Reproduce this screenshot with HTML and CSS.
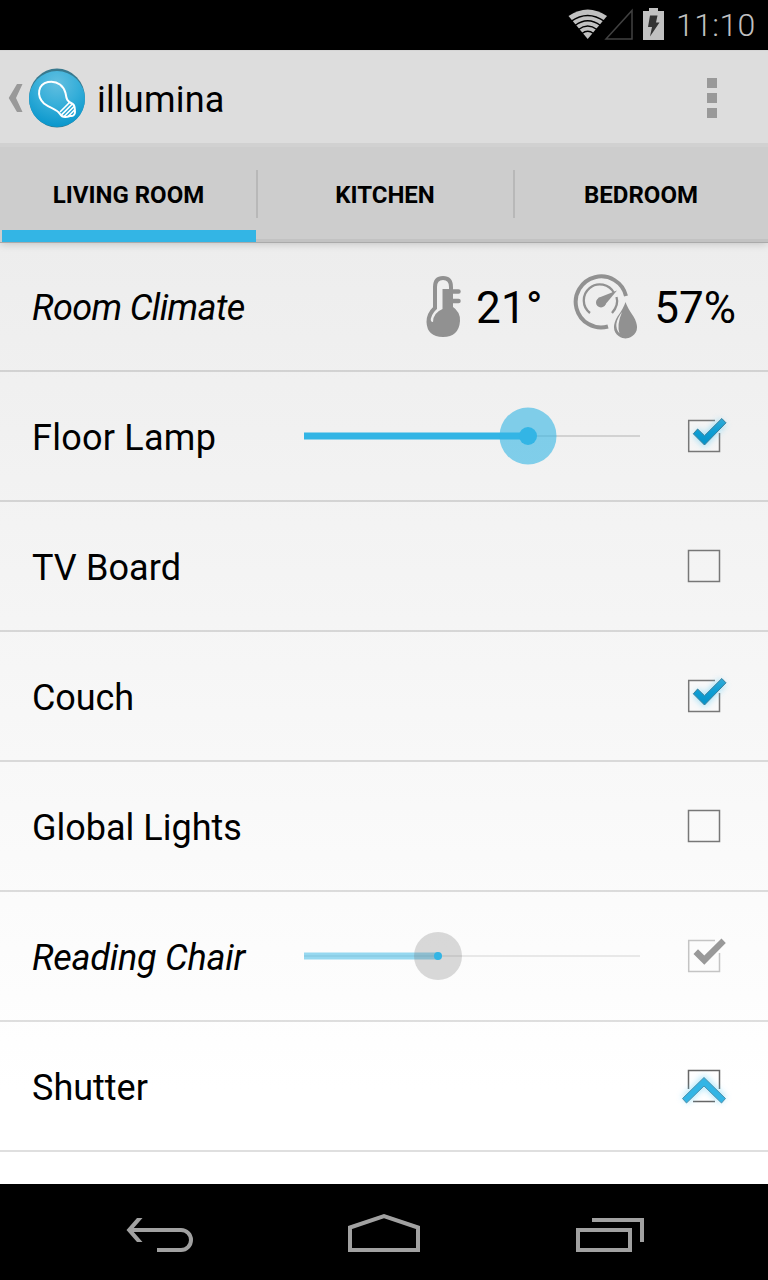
FILE: index.html
```html
<!DOCTYPE html>
<html lang="en">
<head>
<meta charset="utf-8">
<title>illumina</title>
<link rel="stylesheet" href="styles.css">
</head>
<body>
<svg width="0" height="0" class="defs">
  <defs>
    <linearGradient id="blue" x1="0" y1="0" x2="0" y2="1"><stop offset="0" stop-color="#33aad6"/><stop offset=".5" stop-color="#0d9dd3"/><stop offset="1" stop-color="#0792c7"/></linearGradient>
    <radialGradient id="logo" cx=".5" cy=".22" r=".8"><stop offset="0" stop-color="#62bfe0"/><stop offset=".5" stop-color="#35aed9"/><stop offset="1" stop-color="#0795cb"/></radialGradient>
    <filter id="glow" x="-50%" y="-50%" width="200%" height="200%"><feGaussianBlur stdDeviation="3.2"/></filter>
    <symbol id="on" viewBox="0 0 64 64">
      <path d="M13 17h26l8 11-3.500 1v18.500H13z" fill="#fff" opacity=".3"/>
      <path d="M39 16.500H12.700v31H43.500V29" fill="none" stroke="#777" stroke-width="1.500"/>
      <path d="M20 28l8.500 8.500L46.500 18" fill="none" stroke="#61cdf5" stroke-width="9" opacity=".55" filter="url(#glow)"/>
      <path d="M17.300 29.800l4.300-4.800 6.900 6.700 17.300-17.200 4.200 4.300L28.500 41z" fill="url(#blue)" stroke="#397f9b"/>
    </symbol>
    <symbol id="off" viewBox="0 0 64 64"><rect x="12.500" y="16.500" width="31" height="31" fill="none" stroke="#777" stroke-width="1.500"/></symbol>
    <symbol id="dim" viewBox="0 0 64 64">
      <path d="M39 16.500H12.700v31H43.500V29" fill="none" stroke="#c4c4c4" stroke-width="1.500"/>
      <path d="M17.500 30l4.500-4.800 6.300 6.300L45.500 14.500l4.300 4.400L28.300 40.700z" fill="#999"/>
    </symbol>
  </defs>
</svg>
<main class="screen">
  <header class="status">
    <svg width="104" height="50" viewBox="0 0 104 50">
      <path d="M8.500 16Q27.700 3 47 16L27.700 39z" fill="#c1c1c1"/>
      <g fill="none" stroke="#000" stroke-width="1.500"><path d="M11 21.300Q27.700 9.500 44.500 21.300M15 25.500Q27.700 16 40.500 25.500M18.500 29.500Q27.700 22.500 37 29.500M22 33.500Q27.700 29 33.500 33.500"/></g>
      <path d="M46 39L72 10.500V39z" fill="none" stroke="#414141" stroke-width="1.500"/>
      <path d="M83 11h6V8h9v3h6v29H83z" fill="#c1c1c1"/>
      <path d="M90 15.500h7.500L96 22.500h3.500L90 36.500 92 27h-4z" fill="#333"/>
    </svg>
    <span class="clock">11:10</span>
  </header>
  <section class="actionbar">
    <svg width="86" height="93" viewBox="0 0 86 93">
      <path d="M17 34h5.500L16 48l6.500 14H17L8.700 48z" fill="#999"/>
      <ellipse cx="57" cy="48" rx="28" ry="29.500" fill="#38798e"/>
      <ellipse cx="57" cy="49" rx="28" ry="28" fill="url(#logo)"/>
      <g fill="none" stroke="#fff" stroke-width="2" stroke-linejoin="round" stroke-linecap="round">
        <path d="M60 64C56 58 51 59 44 53.500C36 46 38 34 48 32C58 30 64 37 65.500 43C66.500 49 67 51.500 72 53.500C75.500 55 74.500 58 75 62C75 65 73 66.500 70 66C66 67.500 62 67.500 60 64z"/>
        <path stroke-width="1.700" d="M60.500 61.500l8.500-8.500M62 64.300l10.300-10.300M64.500 66l9-9M68.500 66l6-6"/>
      </g>
    </svg>
    <h1>illumina</h1>
    <span class="overflow"><i></i><i></i><i></i></span>
  </section>
  <nav class="tabs">
    <div class="tab active"><span>LIVING ROOM</span></div>
    <div class="tab"><span>KITCHEN</span></div>
    <div class="tab"><span>BEDROOM</span></div>
  </nav>
  <section class="list">
    <div class="row climate">
      <span class="label italic">Room Climate</span>
      <svg width="36" height="64" viewBox="0 0 36 64">
        <path d="M9 33V12q0-9 8-9t8 9v21Q32.500 38 32 46q-1 14-15 14T2.500 47Q2.500 39 9 33z" fill="none" stroke="#919191" stroke-width="4"/>
        <path d="M16.500 14H26v19q7 5 6 14-2 12-15 13Q4 59 3 47q0-3 1-6 0 6 3 6 0-9 9.500-13z" fill="#919191"/>
        <path d="M24 16.500h8.500M24 26h8.500" stroke="#919191" stroke-width="4.500" stroke-linecap="round"/>
      </svg>
      <span class="value temp">21°</span>
      <svg width="66" height="66" viewBox="0 0 66 66">
        <g fill="none" stroke="#919191"><path d="M53 22A25.500 25.500 0 1 0 35 52.500" stroke-width="4"/><path d="M17 39A16 16 0 1 1 41 19M43.500 23q2.500 8-4.500 16" stroke-width="2.300"/></g>
        <circle cx="28" cy="28.500" r="5" fill="#919191"/><path d="M25 24L44 16.500 31 32z" fill="#919191"/>
        <path d="M52.500 28q2 6 8 14.500c10 17-4 22-8 22s-18-5-8-22q6-8 8-14.500z" fill="#919191"/>
        <path d="M49 38Q39 51 46.500 59.500 43.500 51 49 38z" fill="#eee"/>
      </svg>
      <span class="value humidity">57%</span>
    </div>
    <div class="row"><span class="label floor">Floor Lamp</span>
      <svg class="slider" width="360" height="64" viewBox="0 0 360 64"><path d="M12 32h336" stroke="#d2d2d2" stroke-width="2"/><path d="M12 32h224" stroke="#33b5e5" stroke-width="7"/><circle cx="236" cy="32" r="28.500" fill="#33b5e5" opacity=".6"/><circle cx="236" cy="32" r="9" fill="#33b5e5"/></svg>
      <svg class="check" width="64" height="64"><use href="#on"/></svg></div>
    <div class="row"><span class="label tv">TV Board</span><svg class="check" width="64" height="64"><use href="#off"/></svg></div>
    <div class="row"><span class="label couch">Couch</span><svg class="check" width="64" height="64"><use href="#on"/></svg></div>
    <div class="row"><span class="label">Global Lights</span><svg class="check" width="64" height="64"><use href="#off"/></svg></div>
    <div class="row"><span class="label italic reading">Reading Chair</span>
      <svg class="slider" width="360" height="64" viewBox="0 0 360 64"><path d="M12 32h336" stroke="#e8e8e8" stroke-width="2"/><path d="M12 32h134" stroke="#33b5e5" stroke-width="7" opacity=".5"/><circle cx="146" cy="32" r="24" fill="#777" opacity=".27"/><circle cx="146" cy="32" r="4" fill="#33b5e5"/></svg>
      <svg class="check" width="64" height="64"><use href="#dim"/></svg></div>
    <div class="row"><span class="label">Shutter</span>
      <svg class="check" width="64" height="64" viewBox="0 0 64 64"><path d="M12.500 35V16.500H43.500V35M17 47.500h22" fill="none" stroke="#666" stroke-width="1.500"/><path d="M9 46l19-19 19 19" fill="none" stroke="#61cdf5" stroke-width="9" opacity=".5" filter="url(#glow)"/><path d="M6.500 44.500L28 23.500l21.500 21-4 4.500L28 32 10.500 49z" fill="#33b5e5" stroke="#4c91ad" stroke-width="1"/></svg></div>
  </section>
  <footer class="navbar">
    <svg width="768" height="96" viewBox="0 0 768 96">
      <g fill="none" stroke="#a1a1a1" stroke-width="4">
        <path d="M130 46H181a10 10 0 0 1 0 20H157"/>
        <path d="M350 66V43.500L384 32l34 11.500V66z"/>
        <path d="M578 46h52v20h-52zM592 36h50v22"/>
      </g>
      <path d="M137 34h5.500L132 46l10.500 12H137L126.500 46z" fill="#a1a1a1"/>
    </svg>
  </footer>
</main>
</body>
</html>
```
FILE: styles.css
```css
* { box-sizing: border-box; }
body { margin: 0; background: #000; font-family: Roboto, sans-serif; color: #000; }
svg { display: block; flex: none; }
.defs { position: absolute; }
.screen { width: 768px; height: 1280px; overflow: hidden; display: flex; flex-direction: column; }
.status { height: 50px; flex: none; display: flex; padding-left: 560px; background: #000; }
.clock { margin-left: 12px; font-size: 32px; line-height: 51px; color: #c1c1c1; letter-spacing: .4px; font-weight: 300; }
.actionbar { height: 93px; flex: none; display: flex; align-items: center; background: linear-gradient(#d5d5d5 1px, #ddd 1px); }
h1 { margin: 7px 0 0 11px; font-size: 36px; line-height: 42px; font-weight: 400; letter-spacing: .2px; }
.overflow { margin: 3px 51px 0 auto; display: flex; flex-direction: column; gap: 5px; }
.overflow i { width: 10px; height: 10px; background: #999; }
.tabs { height: 100px; flex: none; display: grid; grid-template-columns: 256px 257px 255px; background: #cdcdcd; border-top: 4px solid #d1d1d1; border-bottom: 1px solid #aaa; box-shadow: 0 1px 8px rgba(0,0,0,.18); clip-path: inset(0 0 -14px 0); z-index: 1; }
.tab { display: flex; justify-content: center; padding: 34px 0 0 1px; font-size: 24px; line-height: 28px; font-weight: 700; background: linear-gradient(#b8b8b8,#b8b8b8) left 23px / 2px 48px no-repeat, linear-gradient(#c2c2c2,#c2c2c2) left bottom / 100% 3px no-repeat; }
.tab.active { background: linear-gradient(#33b5e5,#33b5e5) 2px bottom / 254px 12px no-repeat; }
.list { flex: 1; background: linear-gradient(#ededed,#fff 90%); }
.row { height: 130px; display: flex; align-items: center; padding: 0 32px; border-bottom: 2px solid rgba(0,0,0,.125); }
.label { font-size: 36px; line-height: 44px; width: 260px; flex: none; padding-top: 4px; white-space: nowrap; }
.italic { font-style: italic; }
.floor { letter-spacing: .25px; }
.tv { letter-spacing: .1px; }
.couch { letter-spacing: -.1px; }
.reading { letter-spacing: -.25px; }
.check { margin-left: auto; margin-right: -4px; }
.slider + .check { margin-left: 24px; }
.row.climate { height: 129px; }
.climate .label { width: 394px; padding-top: 2px; letter-spacing: -.62px; }
.value { font-size: 44px; line-height: 52px; padding-top: 2px; white-space: nowrap; }
.temp { width: 98px; margin-left: 14px; letter-spacing: .3px; }
.humidity { margin-left: 15px; }
.navbar { height: 96px; flex: none; background: #000; }
```
